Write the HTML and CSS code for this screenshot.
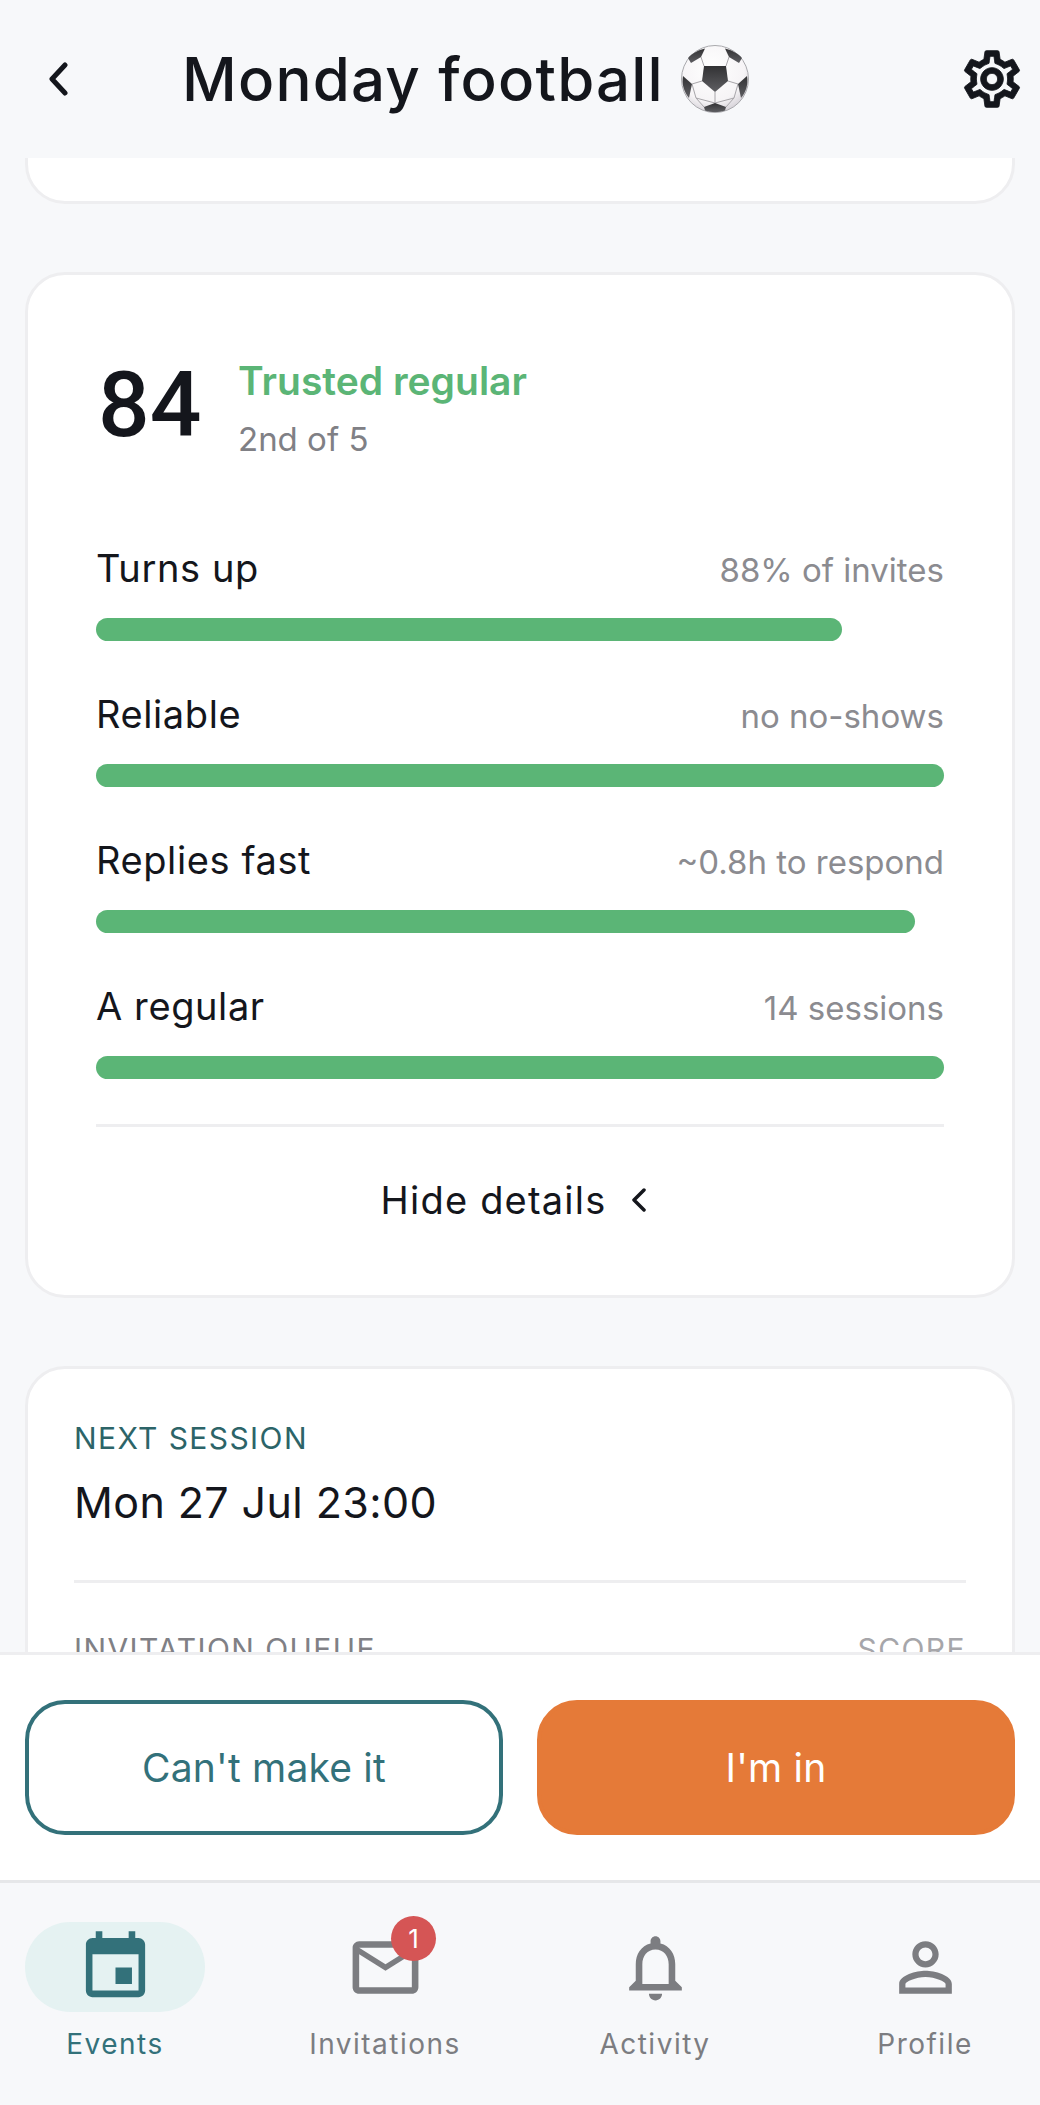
FILE: index.html

```html
<!DOCTYPE html>
<html lang="en">
<head>
    <meta charset="UTF-8">
    <meta name="viewport" content="width=device-width, initial-scale=1.0">
    <title>Monday football</title>
    <link rel="stylesheet" href="styles.css">
</head>
<body>
    <div class="app">
        <header class="top-bar">
            <svg class="back-icon" viewBox="0 0 20 34"><polyline points="17,3 4,17 17,31"/></svg>
            <h1 class="page-title">Monday football</h1>
            <svg class="ball-icon" viewBox="0 0 68 68">
                <defs>
                    <radialGradient id="ballFace" cx="45%" cy="35%" r="70%">
                        <stop offset="0" stop-color="#ffffff"/>
                        <stop offset="0.7" stop-color="#f6f4f6"/>
                        <stop offset="1" stop-color="#cfcbd2"/>
                    </radialGradient>
                    <linearGradient id="ballDark" x1="0" y1="0" x2="0" y2="1">
                        <stop offset="0" stop-color="#323234"/>
                        <stop offset="1" stop-color="#5e5e62"/>
                    </linearGradient>
                </defs>
                <circle cx="34" cy="34" r="33.500" fill="url(#ballFace)" stroke="#a9a9ad" stroke-width="1"/>
                <path d="M20 12L23 21M48 12L45 21M21 36L11 39M47 36L57 39M34 47V58M11 39L15 53L34 58L53 53L57 39M15 53L23 62M53 53L45 62" stroke="#a8a6aa" stroke-width="1" fill="none"/>
                <polygon points="23,21 45,21 47,36 34,47 21,36" fill="url(#ballDark)"/>
                <path d="M24 3.500C17 5 11 8.500 7 13L10 18L20 12Z" fill="url(#ballDark)"/>
                <path d="M44 3.500C51 5 57 8.500 61 13L58 18L48 12Z" fill="url(#ballDark)"/>
                <path d="M2 31C.5 39 3 47 8 53L11 39Z" fill="url(#ballDark)"/>
                <path d="M66 31C67.500 39 65 47 60 53L57 39Z" fill="url(#ballDark)"/>
                <path d="M23 62L34 58L45 62L44 65.500C37 67.500 31 67.500 24 65.500Z" fill="url(#ballDark)"/>
            </svg>
            <svg class="gear-icon" viewBox="0 0 24 24"><path d="M19.430 12.980c.04-.32.07-.64.07-.98 0-.34-.03-.66-.07-.98l2.110-1.650c.19-.15.24-.42.12-.64l-2-3.460c-.09-.16-.26-.25-.44-.25-.06 0-.12.01-.17.03l-2.490 1c-.52-.4-1.080-.73-1.690-.98l-.38-2.650C14.460 2.180 14.250 2 14 2h-4c-.25 0-.46.18-.49.42l-.38 2.650c-.61.25-1.170.59-1.690.98l-2.490-1c-.06-.02-.12-.03-.18-.03-.17 0-.34.09-.43.25l-2 3.460c-.13.22-.07.49.12.64l2.110 1.650c-.04.32-.07.65-.07.98 0 .33.03.66.07.98l-2.110 1.650c-.19.15-.24.42-.12.64l2 3.460c.09.16.26.25.44.25.06 0 .12-.01.17-.03l2.490-1c.52.4 1.080.73 1.690.98l.38 2.650c.03.24.24.42.49.42h4c.25 0 .46-.18.49-.42l.38-2.650c.61-.25 1.170-.59 1.690-.98l2.490 1c.06.02.12.03.18.03.17 0 .34-.09.43-.25l2-3.460c.12-.22.07-.49-.12-.64l-2.110-1.650zm-1.980-1.710c.04.31.05.52.05.73 0 .21-.02.43-.05.73l-.14 1.130.89.7 1.080.84-.7 1.210-1.270-.51-1.040-.42-.9.68c-.43.32-.84.56-1.250.73l-1.060.43-.16 1.130-.2 1.350h-1.400l-.19-1.350-.16-1.130-1.060-.43c-.43-.18-.83-.41-1.230-.71l-.91-.7-1.060.43-1.270.51-.7-1.210 1.080-.84.89-.7-.14-1.130c-.03-.31-.05-.54-.05-.74s.02-.43.05-.73l.14-1.130-.89-.7-1.080-.84.7-1.210 1.270.51 1.040.42.9-.68c.43-.32.84-.56 1.250-.73l1.060-.43.16-1.130.2-1.350h1.390l.19 1.350.16 1.130 1.060.43c.43.18.83.41 1.230.71l.91.7 1.060-.43 1.270-.51.7 1.210-1.070.85-.89.7.14 1.130zM12 8c-2.210 0-4 1.790-4 4s1.790 4 4 4 4-1.790 4-4-1.790-4-4-4zm0 6c-1.100 0-2-.9-2-2s.9-2 2-2 2 .9 2 2-.9 2-2 2z"/></svg>
        </header>

        <main class="content">
            <section class="card card-scrolled"></section>

            <section class="card score-card">
                <div class="score-head">
                    <div class="score-value">84</div>
                    <div class="score-text">
                        <div class="score-title">Trusted regular</div>
                        <div class="score-rank">2nd of 5</div>
                    </div>
                </div>

                <div class="metric">
                    <div class="metric-head"><span class="metric-name">Turns up</span><span class="metric-note">88% of invites</span></div>
                    <div class="metric-track"><div class="metric-fill" style="width: 88%"></div></div>
                </div>
                <div class="metric">
                    <div class="metric-head"><span class="metric-name">Reliable</span><span class="metric-note">no no-shows</span></div>
                    <div class="metric-track"><div class="metric-fill" style="width: 100%"></div></div>
                </div>
                <div class="metric">
                    <div class="metric-head"><span class="metric-name">Replies fast</span><span class="metric-note">~0.8h to respond</span></div>
                    <div class="metric-track"><div class="metric-fill" style="width: 96.600%"></div></div>
                </div>
                <div class="metric">
                    <div class="metric-head"><span class="metric-name">A regular</span><span class="metric-note">14 sessions</span></div>
                    <div class="metric-track"><div class="metric-fill" style="width: 100%"></div></div>
                </div>

                <div class="details-toggle">
                    <span>Hide details</span>
                    <svg class="toggle-icon" viewBox="0 0 16 24"><polyline points="13,2 3,12 13,22"/></svg>
                </div>
            </section>

            <section class="card session-card">
                <div class="session-label">NEXT SESSION</div>
                <div class="session-date">Mon 27 Jul 23:00</div>
                <div class="session-divider"></div>
                <div class="queue-head">
                    <span class="queue-title">INVITATION QUEUE</span>
                    <span class="queue-score">SCORE</span>
                </div>
            </section>
        </main>

        <div class="action-bar">
            <button class="btn btn-outline">Can't make it</button>
            <button class="btn btn-primary">I'm in</button>
        </div>

        <nav class="tab-bar">
            <div class="tab active">
                <div class="tab-icon">
                    <svg viewBox="0 0 24 24"><path d="M17 12h-5v5h5v-5zM16 1v2H8V1H6v2H5c-1.110 0-1.990.9-1.990 2L3 19c0 1.100.89 2 2 2h14c1.100 0 2-.9 2-2V5c0-1.100-.9-2-2-2h-1V1h-2zm3 18H5V8h14v11z"/></svg>
                </div>
                <span class="tab-label">Events</span>
            </div>
            <div class="tab">
                <div class="tab-icon">
                    <svg viewBox="0 0 24 24"><path d="M20 4H4c-1.100 0-1.990.9-1.990 2L2 18c0 1.100.9 2 2 2h16c1.100 0 2-.9 2-2V6c0-1.100-.9-2-2-2zm0 14H4V8l8 5 8-5v10zm-8-7L4 6h16l-8 5z"/></svg>
                    <span class="badge">1</span>
                </div>
                <span class="tab-label">Invitations</span>
            </div>
            <div class="tab">
                <div class="tab-icon">
                    <svg viewBox="0 0 24 24"><path d="M12 22c1.100 0 2-.9 2-2h-4c0 1.100.9 2 2 2zm6-6v-5c0-3.070-1.630-5.640-4.500-6.320V4c0-.83-.67-1.500-1.500-1.500s-1.500.67-1.500 1.500v.68C7.640 5.360 6 7.920 6 11v5l-2 2v1h16v-1l-2-2zm-2 1H8v-6c0-2.480 1.510-4.500 4-4.500s4 2.020 4 4.500v6z"/></svg>
                </div>
                <span class="tab-label">Activity</span>
            </div>
            <div class="tab">
                <div class="tab-icon">
                    <svg viewBox="0 0 24 24"><path d="M12 5.900c1.160 0 2.100.94 2.100 2.100s-.94 2.100-2.100 2.100S9.900 9.160 9.900 8s.94-2.100 2.100-2.100m0 9c2.970 0 6.100 1.460 6.100 2.100v1.100H5.900V17c0-.64 3.130-2.100 6.100-2.100M12 4C9.790 4 8 5.790 8 8s1.790 4 4 4 4-1.790 4-4-1.790-4-4-4zm0 9c-2.670 0-8 1.340-8 4v3h16v-3c0-2.660-5.330-4-8-4z"/></svg>
                </div>
                <span class="tab-label">Profile</span>
            </div>
        </nav>
    </div>
</body>
</html>
```

FILE: styles.css

```css
* {
    box-sizing: border-box;
}

body {
    margin: 0;
    font-family: 'Inter', 'Liberation Sans', sans-serif;
    background-color: #f7f8fa;
    color: #14161c;
}

.app {
    display: flex;
    flex-direction: column;
    height: 100vh;
    overflow: hidden;
}

.top-bar {
    flex: none;
    height: 158px;
    display: flex;
    align-items: center;
    padding: 0 14px 0 48px;
}

.back-icon {
    width: 20px;
    height: 34px;
    margin-right: 114px;
}

.back-icon polyline {
    fill: none;
    stroke: #14161c;
    stroke-width: 5;
    stroke-linecap: round;
    stroke-linejoin: round;
}

.page-title {
    margin: 0;
    font-size: 60px;
    font-weight: 500;
    letter-spacing: 1.200px;
    white-space: nowrap;
}

.ball-icon {
    width: 68px;
    height: 68px;
    margin-left: 17px;
}

.gear-icon {
    width: 68px;
    height: 68px;
    margin-left: auto;
    fill: #14161c;
    stroke: #14161c;
    stroke-width: 0.3;
}

.content {
    flex: 1;
    min-height: 0;
    overflow: hidden;
    padding: 0 25px;
}

.card {
    background-color: #fff;
    border: 3px solid #eeeef0;
    border-radius: 40px;
}

.card-scrolled {
    height: 200px;
    margin-top: -154px;
}

.score-card {
    margin-top: 68px;
    height: 1026px;
    padding: 78px 68px 0;
}

.score-head {
    display: flex;
    align-items: flex-start;
    height: 192px;
}

.score-value {
    font-family: 'Roboto', sans-serif;
    font-size: 91px;
    font-weight: 500;
    line-height: 96px;
    width: 142px;
    padding-left: 2px;
    margin-top: 4px;
}

.score-text {
    margin-top: 6px;
}

.score-title {
    font-size: 39px;
    font-weight: 600;
    line-height: 44px;
    color: #5bb576;
}

.score-rank {
    margin-top: 15px;
    font-size: 33px;
    line-height: 42px;
    color: #808085;
}

.metric {
    height: 146px;
}

.metric-head {
    display: flex;
    justify-content: space-between;
    align-items: baseline;
    height: 73px;
}

.metric-name {
    font-size: 38px;
    line-height: 46px;
    letter-spacing: 0.6px;
}

.metric-note {
    font-size: 33px;
    color: #8b8b90;
}

.metric-track {
    height: 23px;
}

.metric-fill {
    height: 100%;
    background-color: #5bb576;
    border-radius: 12px;
}

.details-toggle {
    height: 148px;
    padding-right: 12px;
    border-top: 3px solid #eeeef0;
    display: flex;
    align-items: center;
    justify-content: center;
    gap: 25px;
    margin-top: -5px;
    font-size: 38px;
    letter-spacing: 1.200px;
}

.toggle-icon {
    width: 16px;
    height: 24px;
}

.toggle-icon polyline {
    fill: none;
    stroke: #14161c;
    stroke-width: 3.500;
    stroke-linecap: round;
    stroke-linejoin: round;
}

.session-card {
    margin-top: 68px;
    height: 400px;
    padding: 51px 46px 0;
}

.session-label {
    font-size: 30px;
    line-height: 36px;
    letter-spacing: 1.400px;
    color: #2c6468;
}

.session-date {
    margin-top: 19px;
    font-size: 43px;
    line-height: 54px;
    letter-spacing: 0.4px;
}

.session-divider {
    height: 3px;
    margin-top: 51px;
    background-color: #eeeef0;
}

.queue-head {
    display: flex;
    justify-content: space-between;
    margin-top: 48px;
    font-size: 30px;
    line-height: 36px;
    letter-spacing: 1.400px;
}

.queue-title {
    color: #808085;
}

.queue-score {
    color: #a6a6aa;
}

.action-bar {
    flex: none;
    height: 231px;
    display: flex;
    gap: 34px;
    padding: 45px 25px 0;
    background-color: #fff;
    border-top: 3px solid #eeeef0;
    border-bottom: 3px solid #e6e7e9;
}

.btn {
    flex: 1;
    height: 135px;
    border-radius: 40px;
    font-family: inherit;
    font-size: 39px;
    letter-spacing: 0.2px;
}

.btn-outline {
    background-color: #fff;
    border: 4px solid #33717a;
    color: #33717a;
}

.btn-primary {
    background-color: #e57a38;
    border: 4px solid #e57a38;
    color: #fff;
}

.tab-bar {
    flex: none;
    height: 222px;
    display: flex;
    justify-content: space-between;
    padding: 39px 25px 0;
}

.tab {
    width: 180px;
    display: flex;
    flex-direction: column;
    align-items: center;
}

.tab-icon {
    position: relative;
    width: 180px;
    height: 90px;
    border-radius: 45px;
    display: flex;
    align-items: center;
    justify-content: center;
}

.tab-icon svg {
    width: 79px;
    height: 79px;
    fill: #7c7d81;
}

.tab.active .tab-icon {
    background-color: #e5f2f2;
}

.tab.active .tab-icon svg {
    fill: #33717a;
}

.tab-label {
    margin-top: 14px;
    font-size: 28px;
    line-height: 36px;
    letter-spacing: 1.500px;
    color: #7c7d81;
    white-space: nowrap;
}

.tab.active .tab-label {
    color: #33717a;
}

.badge {
    position: absolute;
    top: -6px;
    left: 96px;
    width: 45px;
    height: 45px;
    border-radius: 50%;
    background-color: #d55555;
    color: #fff;
    font-size: 26px;
    line-height: 45px;
    text-align: center;
}
```
